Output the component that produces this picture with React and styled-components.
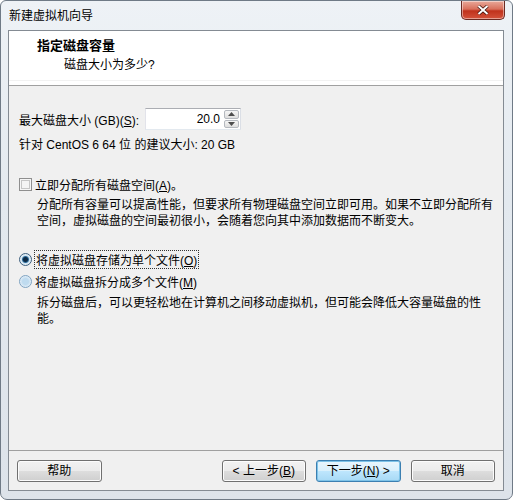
import React from "react";
import styled, { createGlobalStyle } from "styled-components";

const GlobalStyle = createGlobalStyle`
  html, body { margin: 0; padding: 0; background: #ffffff; }
  body {
    font-family: "Liberation Sans", "Noto Sans CJK SC", sans-serif;
    font-size: 12px;
    color: #000;
  }
`;

const Window = styled.div`
  width: 513px;
  height: 500px;
  box-sizing: border-box;
  display: flex;
  flex-direction: column;
  padding: 0 8px 8px 7px;
  border-radius: 6px 6px 7px 7px;
  border: 1px solid #6f7a86;
  background: linear-gradient(180deg, #eef2f6 0%, #e3e9ef 40%, #dde3ea 100%);
`;

const TitleBar = styled.div`
  height: 29px;
  display: flex;
  align-items: center;
  justify-content: space-between;
  padding-left: 1px;
  line-height: 16px;
`;

const Close = styled.div`
  width: 44px;
  height: 19px;
  margin-top: -10px;
  margin-right: -1px;
  box-sizing: border-box;
  border: 1px solid #6b2a22;
  border-top: none;
  border-radius: 0 0 5px 5px;
  background: linear-gradient(180deg, #e9a99a 0%, #d8705c 45%, #c0321c 55%, #d4523b 100%);
  display: flex;
  align-items: center;
  justify-content: center;
  box-shadow: inset 0 0 0 1px rgba(255, 255, 255, 0.45);
`;

const Client = styled.div`
  flex: 1;
  display: flex;
  flex-direction: column;
  border: 1px solid #848b93;
  background: #f0f0f0;
`;

const Header = styled.div`
  height: 55px;
  box-sizing: border-box;
  padding: 7px 0 0 28px;
  background: #ffffff;
  border-bottom: 1px solid #a0a0a0;
  box-shadow: inset 0 -4px 0 #ffffff, inset 0 -5px 0 #f2f2f2;
`;

const HeaderTitle = styled.div`
  font-size: 13px;
  font-weight: bold;
  line-height: 16px;
`;

const HeaderSub = styled.div`
  margin: 3px 0 0 27px;
  line-height: 16px;
`;

const Body = styled.div`
  flex: 1;
  display: flex;
  flex-direction: column;
  padding: 22px 10px 0 10px;
`;

const SizeRow = styled.div`
  display: flex;
  align-items: center;
  gap: 6px;
  height: 22px;
`;

const Spin = styled.div`
  width: 96px;
  height: 22px;
  box-sizing: border-box;
  display: flex;
  align-items: center;
  background: #fff;
  border: 1px solid #abadb3;
  border-left-color: #e2e3ea;
  border-right-color: #dbdfe6;
  border-bottom-color: #e3e9ef;
`;

const SpinValue = styled.div`
  flex: 1;
  text-align: right;
  padding-right: 4px;
  line-height: 16px;
`;

const SpinButtons = styled.div`
  width: 15px;
  height: 18px;
  margin-right: 1px;
  display: flex;
  flex-direction: column;
  gap: 1px;
`;

const SpinHalf = styled.div`
  flex: 1;
  box-sizing: border-box;
  border: 1px solid #b5b9bf;
  border-radius: 2px;
  background: linear-gradient(180deg, #f6f6f6, #dedede);
  display: flex;
  align-items: center;
  justify-content: center;
`;

const Line = styled.div`
  line-height: 16px;
  margin-top: ${(p) => p.$top || 0}px;
  padding-left: ${(p) => p.$indent || 0}px;
  white-space: nowrap;
`;

const OptionRow = styled.div`
  display: flex;
  align-items: center;
  gap: 3px;
  height: 16px;
  margin-top: ${(p) => p.$top || 0}px;
`;

const CheckBox = styled.div`
  width: 13px;
  height: 13px;
  box-sizing: border-box;
  border: 1px solid #8f8f8f;
  background: #f4f4f4;
  box-shadow: inset 0 0 0 1px #f6f6f6, inset 0 0 0 2px #c6c6c6;
`;

const Radio = styled.div`
  width: 13px;
  height: 13px;
  box-sizing: border-box;
  border-radius: 50%;
  border: 1px solid ${(p) => (p.$checked ? "#3d5f7e" : "#7ea3c2")};
  background: ${(p) =>
    p.$checked
      ? "radial-gradient(circle, #0e2a45 0 2px, #2f6d9b 3px, #cfe3f1 4px, #f4f8fb 6px)"
      : "radial-gradient(circle, #bfdbef 0 3px, #dbeaf6 5px, #eef5fb 6px)"};
`;

const Focus = styled.span`
  outline: 1px dotted #333;
  outline-offset: 0;
  padding: 0 1px;
`;

const Key = styled.span`
  text-decoration: underline;
  text-underline-offset: 1px;
`;

const Footer = styled.div`
  height: 40px;
  box-sizing: border-box;
  border-top: 1px solid #a0a0a0;
  display: flex;
  align-items: flex-start;
  padding: 9px 8px 0 8px;
  gap: 10px;
`;

const Button = styled.div`
  width: 85px;
  height: 22px;
  box-sizing: border-box;
  border-radius: 3px;
  border: 1px solid ${(p) => (p.$primary ? "#3c7fb1" : "#707070")};
  background: ${(p) =>
    p.$primary
      ? "linear-gradient(180deg, #eaf6fd 0%, #d9f0fc 50%, #bee6fd 51%, #a7d9f5 100%)"
      : "linear-gradient(180deg, #f2f2f2 0%, #ebebeb 50%, #dddddd 51%, #cfcfcf 100%)"};
  box-shadow: inset 0 0 0 1px ${(p) => (p.$primary ? "#7ec3e8" : "#fcfcfc")};
  display: flex;
  align-items: center;
  justify-content: center;
  line-height: 16px;
  margin-left: ${(p) => p.$push || 0}px;
`;

const Arrow = ({ up }) => (
  <svg width="7" height="4" viewBox="0 0 7 4">
    <path d={up ? "M0 4 L3.5 0 L7 4 Z" : "M0 0 L3.5 4 L7 0 Z"} fill="#4d4d4d" />
  </svg>
);

export default function App() {
  return (
    <>
      <GlobalStyle />
      <Window>
        <TitleBar>
          <span>新建虚拟机向导</span>
          <Close>
            <svg width="12" height="10" viewBox="0 0 12 10">
              <path d="M1.5 1 L10.5 9 M10.5 1 L1.5 9" stroke="#3a0d06" strokeWidth="3.4" />
              <path d="M1.5 1 L10.5 9 M10.5 1 L1.5 9" stroke="#ffffff" strokeWidth="2" />
            </svg>
          </Close>
        </TitleBar>
        <Client>
          <Header>
            <HeaderTitle>指定磁盘容量</HeaderTitle>
            <HeaderSub>磁盘大小为多少?</HeaderSub>
          </Header>
          <Body>
            <SizeRow>
              <span>
                最大磁盘大小 (GB)(<Key>S</Key>):
              </span>
              <Spin>
                <SpinValue>20.0</SpinValue>
                <SpinButtons>
                  <SpinHalf>
                    <Arrow up />
                  </SpinHalf>
                  <SpinHalf>
                    <Arrow />
                  </SpinHalf>
                </SpinButtons>
              </Spin>
            </SizeRow>
            <Line $top={7}>针对 CentOS 6 64 位 的建议大小: 20 GB</Line>

            <OptionRow $top={23}>
              <CheckBox />
              <span>
                立即分配所有磁盘空间(<Key>A</Key>)。
              </span>
            </OptionRow>
            <Line $top={5} $indent={18}>
              分配所有容量可以提高性能，但要求所有物理磁盘空间立即可用。如果不立即分配所有
            </Line>
            <Line $indent={18}>空间，虚拟磁盘的空间最初很小，会随着您向其中添加数据而不断变大。</Line>

            <OptionRow $top={22}>
              <Radio $checked />
              <Focus>
                将虚拟磁盘存储为单个文件(<Key>O</Key>)
              </Focus>
            </OptionRow>
            <OptionRow $top={6}>
              <Radio />
              <span>
                将虚拟磁盘拆分成多个文件(<Key>M</Key>)
              </span>
            </OptionRow>
            <Line $top={6} $indent={18}>
              拆分磁盘后，可以更轻松地在计算机之间移动虚拟机，但可能会降低大容量磁盘的性
            </Line>
            <Line $indent={18}>能。</Line>
          </Body>
          <Footer>
            <Button>帮助</Button>
            <Button $push={110}>
              &lt; 上一步(<Key>B</Key>)
            </Button>
            <Button $primary>
              下一步(<Key>N</Key>) &gt;
            </Button>
            <Button>取消</Button>
          </Footer>
        </Client>
      </Window>
    </>
  );
}
